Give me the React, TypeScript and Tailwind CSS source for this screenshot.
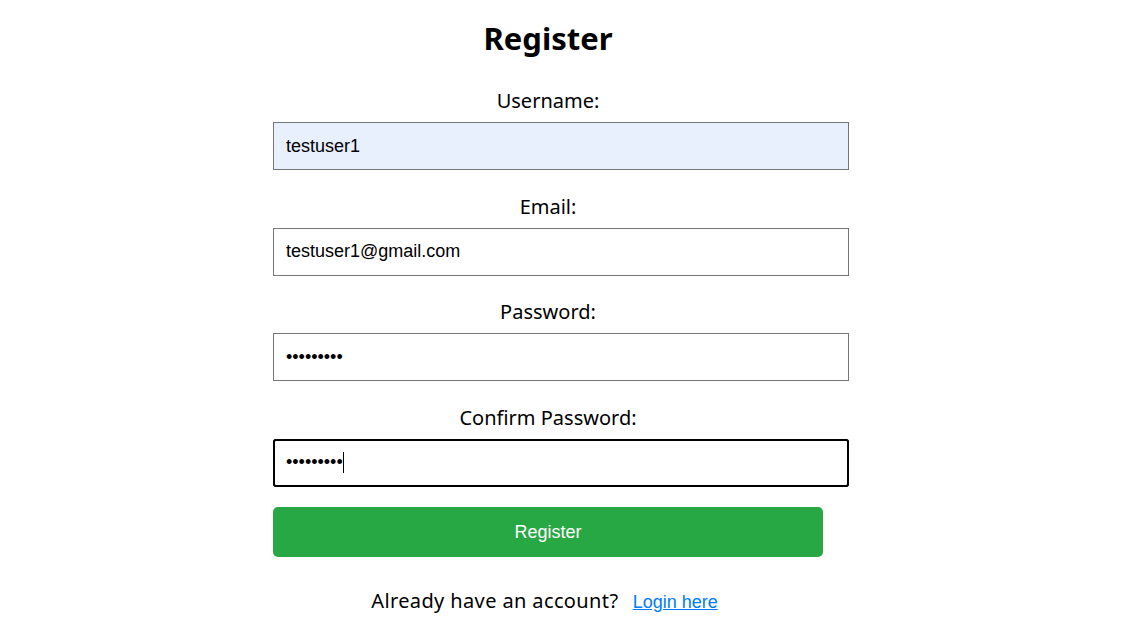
import { useState } from "react";

const FIELDS = [
  { label: "Username:", type: "text", value: "testuser1", autofill: true },
  { label: "Email:", type: "email", value: "testuser1@gmail.com" },
  { label: "Password:", type: "password", value: "123456789" },
  { label: "Confirm Password:", type: "password", value: "123456789", focus: true },
];

export default function App() {
  const [values, setValues] = useState(FIELDS.map((f) => f.value));

  return (
    <div className="min-h-screen bg-white text-black font-['Noto_Sans',sans-serif]">
      <div className="ml-[273px] w-[550px] pt-[19px] text-center">
        <h1 className="text-[31px] leading-[38px] font-bold mb-[30px]">Register</h1>
        <form onSubmit={(e) => e.preventDefault()}>
          {FIELDS.map((f, i) => (
            <div key={f.label} className="mb-[22.5px]">
              <label className="block h-[28px] text-[20px] leading-[28px] mb-[7px]">
                {f.label}
              </label>
              <div className="relative">
                <input
                  type={f.type}
                  value={values[i]}
                  onChange={(e) => {
                    const next = [...values];
                    next[i] = e.target.value;
                    setValues(next);
                  }}
                  className={`box-content block w-full h-[24px] px-3 py-[11px] text-[18px] font-['Liberation_Sans',Arial,sans-serif] text-left outline-none ${
                    f.focus ? "border border-black outline-2 outline-solid outline-black outline-offset-[-2px] rounded-[3px]" : "border border-[#767676]"
                  } ${f.autofill ? "bg-[#e8f0fe]" : "bg-white"}`}
                />
                {f.focus && (
                  <span className="absolute left-[70px] top-[13px] h-[21px] w-px bg-black" />
                )}
              </div>
            </div>
          ))}
          <button
            type="submit"
            className="block w-full h-[50px] mt-[-2px] rounded-[5px] bg-[#28a745] text-white text-[18px] font-['Liberation_Sans',Arial,sans-serif]"
          >
            Register
          </button>
        </form>
        <p className="mt-[30px] text-[20px] leading-[28px]">
          <span className="tracking-[0.38px]">Already have an account?</span>{" "}
          <a href="#" className="ml-[9px] mr-[7px] text-[#007bff] underline text-[18px] font-['Liberation_Sans',Arial,sans-serif]">
            Login here
          </a>
        </p>
      </div>
    </div>
  );
}
